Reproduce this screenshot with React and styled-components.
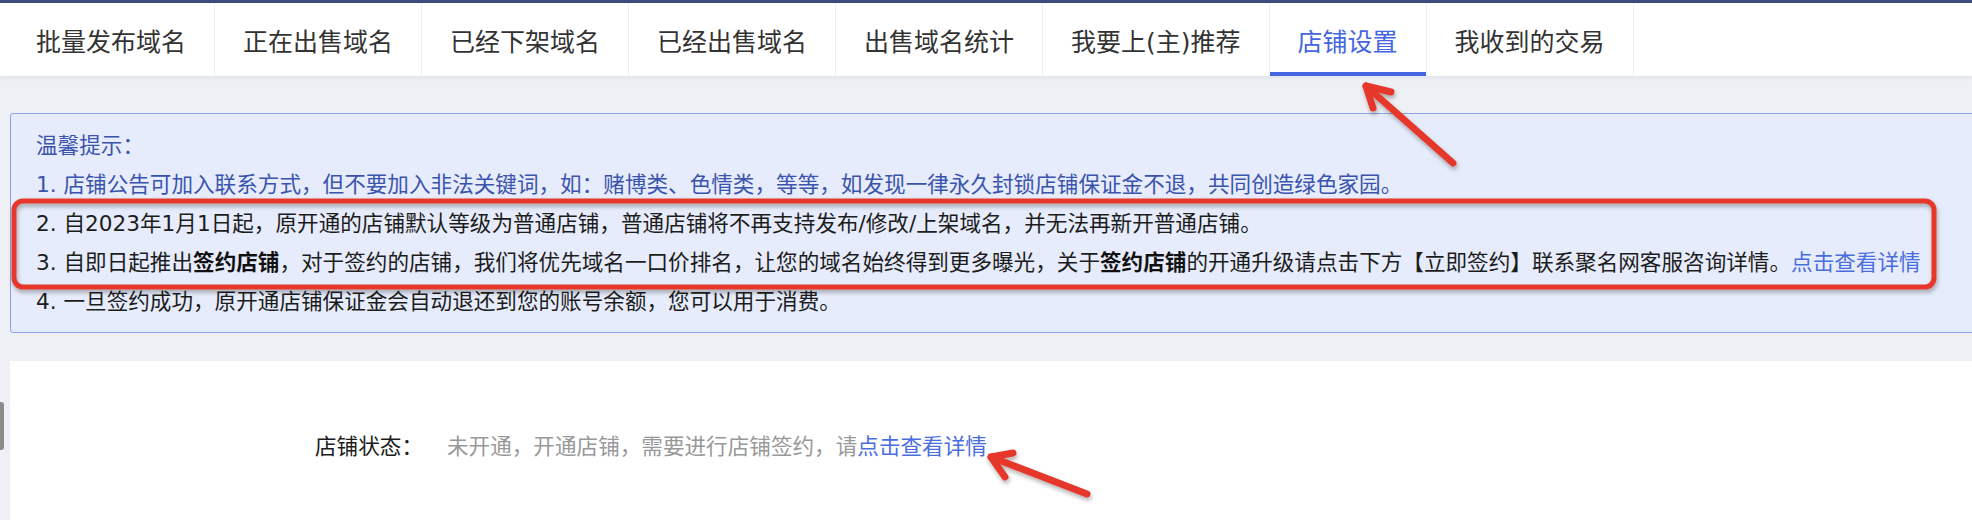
import React from 'react';
import styled, { createGlobalStyle } from 'styled-components';

const GlobalStyle = createGlobalStyle`
    html, body {
        margin: 0;
        padding: 0;
        background: #eef0f5;
        overflow: hidden;
    }
    body {
        font-family: "DejaVu Sans", "Noto Sans CJK SC", sans-serif;
        color: #222;
    }
`;

const tabs = ['批量发布域名', '正在出售域名', '已经下架域名', '已经出售域名', '出售域名统计', '我要上(主)推荐', '店铺设置', '我收到的交易'];

const Page = styled.div`
    position: relative;
    width: 1972px;
    height: 520px;
    overflow: hidden;
`;

const TopLine = styled.div`
    height: 3px;
    background: #3d4b7f;
`;

const TabBar = styled.nav`
    display: flex;
    height: 73px;
    padding-left: 8px;
    background: #fff;
    box-shadow: 0 2px 4px rgba(40, 50, 80, 0.07);
    position: relative;
    z-index: 1;
`;

const Tab = styled.div`
    display: flex;
    align-items: center;
    padding: 0 28px;
    font-size: 25px;
    color: ${p => p.active ? '#4466e3' : '#333'};
    border-right: 1px solid #efefef;
    box-shadow: ${p => p.active ? 'inset 0 -4px 0 #4466e3' : 'none'};
    white-space: nowrap;
`;

const Content = styled.main`
    padding: 37px 0 0 10px;
`;

const Notice = styled.section`
    margin-right: -20px;
    padding: 12px 0 11px 25px;
    background: #e6ecfb;
    border: 1px solid #8ea3e3;
    border-radius: 3px;
    font-size: 21.6px;
    line-height: 39px;
`;

const NoticeLine = styled.p`
    margin: 0;
    white-space: nowrap;
    color: ${p => p.tone === 'blue' ? '#3a54ae' : '#1c1c1c'};
`;

const Strong = styled.b`
    font-weight: bold;
    color: #111;
`;

const Link = styled.a`
    color: #4a6ee0;
    text-decoration: none;
`;

const Panel = styled.section`
    margin-top: 28px;
    margin-right: -20px;
    height: 160px;
    background: #fff;
    padding: 66px 0 0 305px;
    box-sizing: border-box;
`;

const Row = styled.div`
    display: flex;
    font-size: 21.6px;
    line-height: 40px;
`;

const Label = styled.span`
    color: #1c1c1c;
    margin-right: 24px;
`;

const Value = styled.span`
    color: #999;
`;

const SideHandle = styled.div`
    position: absolute;
    left: 0;
    top: 402px;
    width: 4px;
    height: 48px;
    background: #8a8a8a;
    border-radius: 0 3px 3px 0;
`;

const Marks = styled.svg`
    position: absolute;
    left: 0;
    top: 0;
    pointer-events: none;
    overflow: visible;
`;

const Arrow = ({ from, to, left, right }) => (
    <g>
        <line x1={from[0]} y1={from[1]} x2={to[0]} y2={to[1]} />
        <polyline points={`${left[0]},${left[1]} ${to[0]},${to[1]} ${right[0]},${right[1]}`} />
    </g>
);

const App = () => {
    return (
        <Page>
            <GlobalStyle />
            <TopLine />
            <TabBar>
                {tabs.map(t => (
                    <Tab key={t} active={t === '店铺设置'}>{t}</Tab>
                ))}
            </TabBar>
            <Content>
                <Notice>
                    <NoticeLine tone="blue">温馨提示：</NoticeLine>
                    <NoticeLine tone="blue">1. 店铺公告可加入联系方式，但不要加入非法关键词，如：赌博类、色情类，等等，如发现一律永久封锁店铺保证金不退，共同创造绿色家园。</NoticeLine>
                    <NoticeLine>2. 自2023年1月1日起，原开通的店铺默认等级为普通店铺，普通店铺将不再支持发布/修改/上架域名，并无法再新开普通店铺。</NoticeLine>
                    <NoticeLine>3. 自即日起推出<Strong>签约店铺</Strong>，对于签约的店铺，我们将优先域名一口价排名，让您的域名始终得到更多曝光，关于<Strong>签约店铺</Strong>的开通升级请点击下方【立即签约】联系聚名网客服咨询详情。<Link href="#">点击查看详情</Link></NoticeLine>
                    <NoticeLine>4. 一旦签约成功，原开通店铺保证金会自动退还到您的账号余额，您可以用于消费。</NoticeLine>
                </Notice>
                <Panel>
                    <Row>
                        <Label>店铺状态：</Label>
                        <Value>未开通，开通店铺，需要进行店铺签约，请<Link href="#">点击查看详情</Link></Value>
                    </Row>
                </Panel>
            </Content>
            <SideHandle />
            <Marks width="1972" height="520" viewBox="0 0 1972 520">
                <defs>
                    <filter id="shadow" x="-10%" y="-10%" width="120%" height="130%">
                        <feDropShadow dx="1" dy="3" stdDeviation="2" floodColor="#000" floodOpacity="0.3" />
                    </filter>
                </defs>
                <g fill="none" stroke="#e5392b" strokeLinecap="round" strokeLinejoin="round" filter="url(#shadow)">
                    <rect x="14" y="201" width="1920" height="86" rx="9" strokeWidth="5" />
                    <g strokeWidth="7">
                        <Arrow from={[1453, 163]} to={[1366, 86]} left={[1391, 92]} right={[1373, 108]} />
                        <Arrow from={[1087, 494]} to={[991, 457]} left={[1013, 453]} right={[1005, 477]} />
                    </g>
                </g>
            </Marks>
        </Page>
    );
};

export default App;
